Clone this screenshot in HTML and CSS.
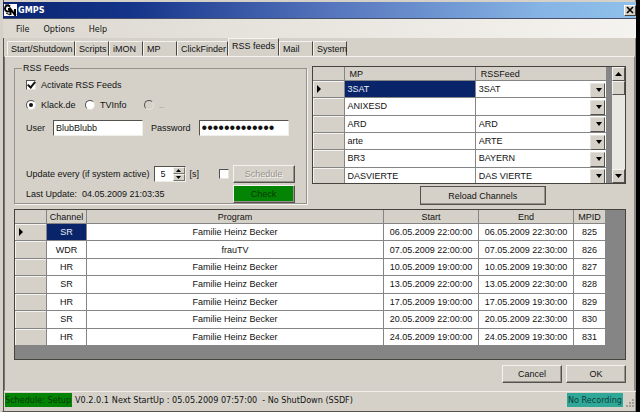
FILE: index.html
```
<!DOCTYPE html>
<html lang="en">

<head>
    <meta charset="UTF-8">
    <meta name="viewport" content="width=device-width, initial-scale=1.0">
    <title>GMPS</title>
    <link rel="stylesheet" href="styles.css">
</head>

<body>
    <div class="window">
        <header class="titlebar">
            <svg class="logo" viewBox="0 0 13 12">
                <rect width="13" height="12" fill="#fff" />
                <path d="M6 2.500C4 .5 1 1.500 1 4.500s3 4 5 2V5H4M6.500 11V5l4.500 6V5" fill="none" stroke="#000" stroke-width="2" />
                <path d="M1 1h4M10 6l2 5M2 9l4 2" stroke="#000" stroke-width="1" />
            </svg>
            <span class="title">GMPS</span>
            <button class="close" aria-label="Close">
                <svg viewBox="0 0 8 8"><path d="M1 1l6 6M7 1L1 7" stroke="#000" stroke-width="1.600" /></svg>
            </button>
        </header>
        <nav class="menu">
            <a href="#">File</a>
            <a href="#">Options</a>
            <a href="#">Help</a>
        </nav>
        <div class="tabs">
            <button class="tab wide">Start/Shutdown</button>
            <button class="tab small">Scripts</button>
            <button class="tab small">iMON</button>
            <button class="tab small">MP</button>
            <button class="tab medium">ClickFinder</button>
            <button class="tab medium selected">RSS feeds</button>
            <button class="tab small">Mail</button>
            <button class="tab small">System</button>
        </div>
        <main class="page">
            <div class="top">
                <fieldset class="feeds">
                    <legend>RSS Feeds</legend>
                    <div class="line">
                        <input type="checkbox" id="activate" checked>
                        <label for="activate">Activate RSS Feeds</label>
                    </div>
                    <div class="line">
                        <input type="radio" name="source" id="klack" checked>
                        <label for="klack" class="klack">Klack.de</label>
                        <input type="radio" name="source" id="tvinfo">
                        <label for="tvinfo" class="tvinfo">TVInfo</label>
                        <input type="radio" name="source" id="other" disabled>
                        <label for="other" class="off">..</label>
                    </div>
                    <div class="line login">
                        <label for="user">User</label>
                        <input type="text" class="box" id="user" value="BlubBlubb">
                        <label for="password">Password</label>
                        <input type="password" class="box" id="password" value="1234567890123">
                    </div>
                    <div class="line update">
                        <label for="every">Update every (if system active)</label>
                        <span class="spin">
                            <input type="number" id="every" value="5">
                            <span class="arrows">
                                <button aria-label="Up"><svg viewBox="0 0 5 3"><path d="M0 3L2.500 0 5 3z" /></svg></button>
                                <button aria-label="Down"><svg viewBox="0 0 5 3"><path d="M0 0l2.500 3L5 0z" /></svg></button>
                            </span>
                        </span>
                        <span>[s]</span>
                        <input type="checkbox" class="right" aria-label="Schedule">
                        <button class="btn" disabled>Schedule</button>
                    </div>
                    <div class="line last">
                        <span class="lastText">Last Update:</span>
                        <span>04.05.2009 21:03:35</span>
                        <button class="btn check right">Check</button>
                    </div>
                </fieldset>
                <div class="channels">
                    <div class="gridBox mapping">
                        <table>
                            <colgroup>
                                <col class="rowCol">
                                <col>
                                <col>
                            </colgroup>
                            <thead>
                                <tr><th></th><th>MP</th><th>RSSFeed</th></tr>
                            </thead>
                            <tbody>
                                <tr><th class="current"></th><td class="active">3SAT</td><td><div class="combo"><select aria-label="RSSFeed"><option>3SAT</option></select></div></td></tr>
                                <tr><th></th><td>ANIXESD</td><td><div class="combo"><select aria-label="RSSFeed"><option></option></select></div></td></tr>
                                <tr><th></th><td>ARD</td><td><div class="combo"><select aria-label="RSSFeed"><option>ARD</option></select></div></td></tr>
                                <tr><th></th><td>arte</td><td><div class="combo"><select aria-label="RSSFeed"><option>ARTE</option></select></div></td></tr>
                                <tr><th></th><td>BR3</td><td><div class="combo"><select aria-label="RSSFeed"><option>BAYERN</option></select></div></td></tr>
                                <tr><th></th><td>DASVIERTE</td><td><div class="combo"><select aria-label="RSSFeed"><option>DAS VIERTE</option></select></div></td></tr>
                            </tbody>
                        </table>
                        <div class="scroll">
                            <button aria-label="Scroll up"><svg viewBox="0 0 7 4"><path d="M0 4L3.500 0 7 4z" /></svg></button>
                            <div class="thumb"></div>
                            <button class="down" aria-label="Scroll down"><svg viewBox="0 0 7 4"><path d="M0 0l3.500 4L7 0z" /></svg></button>
                        </div>
                    </div>
                    <button class="btn reload">Reload Channels</button>
                </div>
            </div>
            <div class="gridBox programs">
                <table>
                    <colgroup>
                        <col class="rowCol">
                        <col class="channelCol">
                        <col>
                        <col class="dateCol">
                        <col class="dateCol">
                        <col class="idCol">
                    </colgroup>
                    <thead>
                        <tr><th></th><th>Channel</th><th>Program</th><th>Start</th><th>End</th><th>MPID</th></tr>
                    </thead>
                    <tbody>
                        <tr><th class="current"></th><td class="active">SR</td><td>Familie Heinz Becker</td><td>06.05.2009 22:00:00</td><td>06.05.2009 22:30:00</td><td>825</td></tr>
                        <tr><th></th><td>WDR</td><td>frauTV</td><td>07.05.2009 22:00:00</td><td>07.05.2009 22:30:00</td><td>826</td></tr>
                        <tr><th></th><td>HR</td><td>Familie Heinz Becker</td><td>10.05.2009 19:00:00</td><td>10.05.2009 19:30:00</td><td>827</td></tr>
                        <tr><th></th><td>SR</td><td>Familie Heinz Becker</td><td>13.05.2009 22:00:00</td><td>13.05.2009 22:30:00</td><td>828</td></tr>
                        <tr><th></th><td>HR</td><td>Familie Heinz Becker</td><td>17.05.2009 19:00:00</td><td>17.05.2009 19:30:00</td><td>829</td></tr>
                        <tr><th></th><td>SR</td><td>Familie Heinz Becker</td><td>20.05.2009 22:00:00</td><td>20.05.2009 22:30:00</td><td>830</td></tr>
                        <tr><th></th><td>HR</td><td>Familie Heinz Becker</td><td>24.05.2009 19:00:00</td><td>24.05.2009 19:30:00</td><td>831</td></tr>
                    </tbody>
                </table>
            </div>
            <div class="actions">
                <button class="btn">Cancel</button>
                <button class="btn">OK</button>
            </div>
        </main>
        <footer class="status">
            <span class="setup">Schedule: Setup</span>
            <span>V0.2.0.1</span>
            <span class="next">Next StartUp : 05.05.2009 07:57:00</span>
            <span>- No ShutDown (SSDF)</span>
            <span class="recording">No Recording</span>
            <svg class="grip" viewBox="0 0 9 9"><path d="M6 0h2v2H6zM3 3h2v2H3zM6 3h2v2H6zM0 6h2v2H0zM3 6h2v2H3zM6 6h2v2H6z" fill="#a29e97" /></svg>
        </footer>
    </div>
</body>

</html>
```
FILE: styles.css
```
* {
    box-sizing: border-box;
}

body {
    margin: 0;
    background: #000;
    color: #111;
    font: 9px/14px "Liberation Sans", Arial, sans-serif;
}

button,
input,
select {
    font: inherit;
    color: inherit;
    margin: 0;
    padding: 0;
}

.window {
    display: flex;
    flex-direction: column;
    min-height: 100vh;
    margin-right: 4px;
    padding-top: 2px;
    background: #d5d1c9;
    border-left: 3px solid #d5d1c9;
    border-bottom: 2px solid #57534f;
    box-shadow: inset 1px 0 #55524e, inset -1px 0 #8c8883;
}

.titlebar {
    display: flex;
    align-items: center;
    height: 17px;
    padding-left: 1px;
    border-bottom: 1px solid #46506a;
    background: linear-gradient(to right, #0a2470, #14348a 20%, #5675bd 52%, #86b4e4 85%, #8fc0ea);
}

.logo {
    width: 13px;
    height: 12px;
}

.title {
    margin-left: 1px;
    color: #fff;
    font: bold 9px/14px "DejaVu Sans Condensed", "DejaVu Sans", sans-serif;
}

.close {
    display: grid;
    place-items: center;
    width: 12px;
    height: 11px;
    margin-left: auto;
    background: #d5d1c9;
    border: 1px solid;
    border-color: #fff #444 #444 #fff;
}

.close svg {
    width: 8px;
    height: 8px;
}

.menu {
    display: flex;
    align-items: center;
    gap: 14px;
    height: 19px;
    padding-left: 13px;
    background: linear-gradient(to right, #dcd8d0, #f5f3ef);
    font-family: "DejaVu Sans Condensed", "DejaVu Sans", sans-serif;
}

.menu a {
    color: inherit;
    text-decoration: none;
}

.tabs {
    display: flex;
    align-items: flex-end;
    height: 18px;
    padding-left: 4px;
}

.tab {
    height: 15px;
    padding-left: 3px;
    background: #d5d1c9;
    border: 1px solid;
    border-color: #f5f3ef #4a4743 transparent #f5f3ef;
    text-align: left;
    white-space: nowrap;
}

.wide {
    width: 68px;
}

.medium {
    width: 51px;
}

.small {
    width: 34px;
}

.selected {
    height: 18px;
    padding-bottom: 3px;
}

.page {
    flex: 1;
    margin: 0 1px;
    padding: 5px 8px 0 9px;
    border: 1px solid;
    border-color: #f5f3ef #8c8883 transparent #77736e;
}

.top {
    display: grid;
    grid-template-columns: 293fr 315fr;
    gap: 5px;
    height: 147px;
}

.feeds {
    min-width: 0;
    height: 142px;
    margin: 0;
    padding: 1px 11px 0;
    border: 1px solid #96928c;
    box-shadow: 1px 1px #f5f3ef;
}

.feeds legend {
    height: 12px;
    margin-left: -4px;
    padding: 0 1px;
    line-height: 12px;
}

.line {
    display: flex;
    align-items: center;
    gap: 5px;
    height: 20px;
    white-space: nowrap;
}

.login {
    height: 26px;
    gap: 8px;
    padding-right: 6px;
}

.update {
    height: 21px;
    gap: 4px;
    margin-top: 22px;
}

.right {
    margin-left: auto;
}

.klack,
.tvinfo {
    width: 39px;
}

.off {
    color: #96928c;
}

.lastText {
    width: 51px;
}

input[type="checkbox"],
input[type="radio"] {
    appearance: none;
    flex: none;
    display: grid;
    place-items: center;
    width: 10px;
    height: 10px;
    background: #fff;
    border: 1px solid;
    border-color: #55524e #e5e2dc #e5e2dc #55524e;
}

input[type="checkbox"]:checked::before {
    content: "";
    width: 3px;
    height: 6px;
    margin-top: -2px;
    border: solid #111;
    border-width: 0 2px 2px 0;
    transform: rotate(40deg);
}

input[type="radio"] {
    border-radius: 50%;
}

input[type="radio"]:checked::before {
    content: "";
    width: 4px;
    height: 4px;
    border-radius: 50%;
    background: #111;
}

input[type="radio"]:disabled {
    background: #d5d1c9;
}

.box,
.spin {
    height: 16px;
    background: #fff;
    border: 1px solid;
    border-color: #55524e #f0eee9 #f0eee9 #55524e;
}

.box {
    flex: 1;
    min-width: 0;
    padding-left: 2px;
}

/* bigger dots */
.box[type="password"] {
    font-size: 16px;
}

.spin {
    display: flex;
    width: 32px;
}

.spin input {
    flex: 1;
    min-width: 0;
    padding-left: 6px;
    border: 0;
    background: none;
    appearance: textfield;
}

.spin input::-webkit-inner-spin-button {
    appearance: none;
}

.arrows {
    display: flex;
    flex-direction: column;
    width: 12px;
}

.arrows button {
    display: grid;
    place-items: center;
    flex: 1;
    background: #d5d1c9;
    border: 1px solid;
    border-color: #f5f3ef #77736e #77736e #f5f3ef;
}

.arrows svg {
    width: 5px;
    height: 3px;
}

.btn {
    width: 62px;
    height: 18px;
    background: #d5d1c9;
    border: 1px solid;
    border-color: #f5f3ef #55524e #55524e #f5f3ef;
    box-shadow: inset -1px -1px #96928c;
}

.btn:disabled {
    color: #96928c;
    text-shadow: 1px 1px #f5f3ef;
}

.check {
    background: #058305;
    color: #023c02;
}

.channels {
    display: flex;
    flex-direction: column;
    align-items: center;
    gap: 2px;
    min-width: 0;
    padding-top: 4px;
}

.reload {
    flex: none;
    width: 126px;
    height: 19px;
    margin-left: 28px;
    border-color: #55524e;
}

.gridBox {
    display: flex;
    background: #858585;
    border: 1px solid #46433f;
}

.mapping {
    flex: none;
    width: 100%;
    height: 118px;
    overflow: hidden;
}

table {
    flex: 1;
    width: 100%;
    min-width: 0;
    border-collapse: separate;
    border-spacing: 0;
    table-layout: fixed;
}

th,
td {
    height: 17px;
    padding: 0;
    border-right: 1px solid #858585;
    border-bottom: 1px solid #858585;
    font-weight: normal;
    white-space: nowrap;
}

th {
    background: #d5d1c9;
}

thead th {
    height: 14px;
    line-height: 12px;
}

td {
    background: #fff;
}

tbody th {
    box-shadow: inset 1px 1px #f5f3ef;
}

.rowCol {
    width: 32px;
}

.channelCol {
    width: 40px;
}

.dateCol {
    width: 95px;
}

.idCol {
    width: 32px;
}

.active {
    background: #0a246a;
    color: #e8ecf6;
}

.current::before {
    content: "";
    display: block;
    margin-left: 4px;
    width: 0;
    border-left: 4px solid #000;
    border-top: 4px solid transparent;
    border-bottom: 4px solid transparent;
}

.mapping table {
    height: 118px;
}

.mapping th,
.mapping td {
    padding-left: 3px;
    text-align: left;
}

.mapping thead th {
    padding-left: 5px;
}

.mapping .current {
    padding-left: 0;
}

.combo {
    position: relative;
}

.combo select {
    display: block;
    width: 100%;
    height: 15px;
    appearance: none;
    background: none;
    border: 0;
}

.combo::before {
    content: "";
    position: absolute;
    top: 1px;
    right: 1px;
    width: 13px;
    height: 13px;
    background: #d5d1c9;
    border: 1px solid;
    border-color: #e5e2dc #55524e #55524e #e5e2dc;
    pointer-events: none;
}

.combo::after {
    content: "";
    position: absolute;
    top: 6px;
    right: 4px;
    border-top: 4px solid #000;
    border-left: 3px solid transparent;
    border-right: 3px solid transparent;
    pointer-events: none;
}

.scroll {
    flex: none;
    display: flex;
    flex-direction: column;
    width: 13px;
    margin-left: 5px;
    background: #e9e7e2;
}

.scroll button,
.thumb {
    display: grid;
    place-items: center;
    height: 14px;
    background: #d5d1c9;
    border: 1px solid;
    border-color: #f5f3ef #55524e #55524e #f5f3ef;
}

.scroll svg {
    width: 7px;
    height: 4px;
}

.scroll .down {
    margin-top: auto;
}

.programs {
    height: 151px;
    padding-right: 19px;
}

.programs table {
    height: 136px;
    text-align: center;
}

.actions {
    display: flex;
    justify-content: flex-end;
    gap: 4px;
    padding: 5px 0 7px;
}

.actions .btn {
    width: 60px;
}

.status {
    display: flex;
    align-items: center;
    gap: 3px;
    height: 20px;
    margin-left: 1px;
    padding: 0 1px 3px;
    border-top: 1px solid #f0eee9;
    font-family: "DejaVu Sans Condensed", "DejaVu Sans", sans-serif;
    white-space: nowrap;
}

.setup {
    width: 67px;
    background: #058305;
    color: #023c02;
}

.next {
    margin-right: 2px;
}

.recording {
    margin-left: auto;
    padding: 0 1px;
    background: #2fa898;
    color: #0a4038;
}

.grip {
    width: 9px;
    height: 9px;
    align-self: flex-end;
}
```
